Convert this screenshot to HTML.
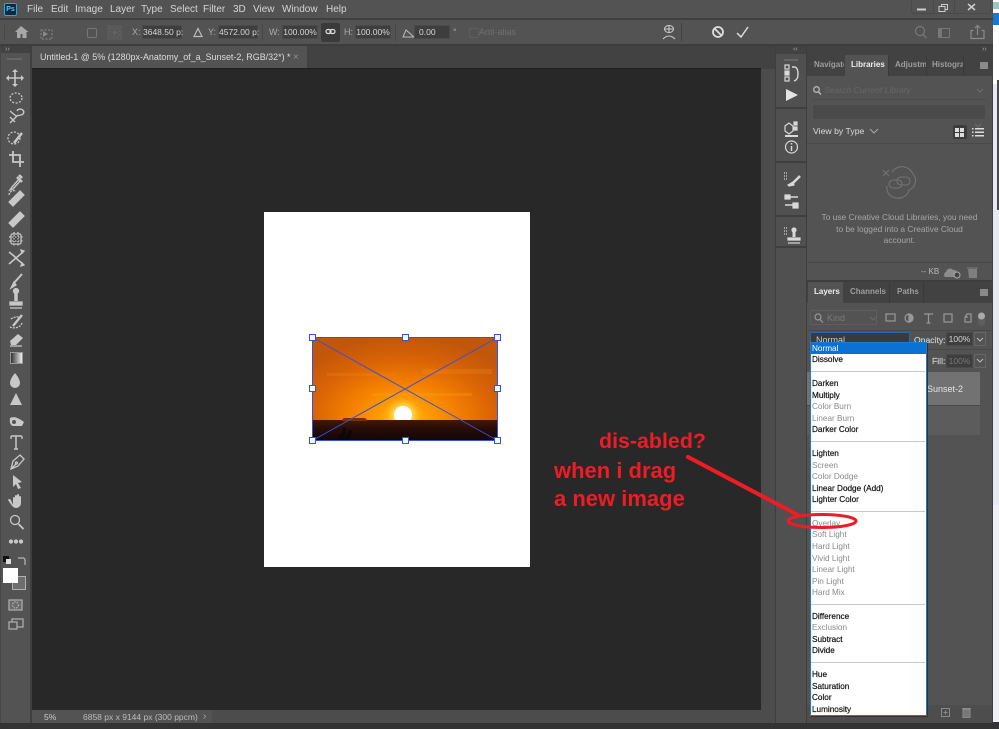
<!DOCTYPE html>
<html><head><meta charset="utf-8"><style>
html,body{margin:0;padding:0;background:#535353}
#r{position:relative;width:999px;height:729px;overflow:hidden;background:#535353;font-family:"Liberation Sans",sans-serif;color:#d0d0d0;filter:blur(.3px)}
#r div{position:absolute;white-space:nowrap}
.m{top:3px;font-size:10px;line-height:13px;color:#d4d4d4}
.o{font-size:9px;line-height:12px;color:#bbb}
.in{background:#3e3e3e;border:1px solid #4a4a4a;box-sizing:border-box;font-size:8.5px;line-height:13px;color:#d6d6d6;text-align:center;height:14px}
.tb{font-size:8px;line-height:12px;font-weight:bold;color:#9d9d9d;overflow:hidden}
.i{font-size:8.2px;line-height:11px;left:812px;color:#111;-webkit-text-stroke:.2px #111}
.d{color:#8a8a8a;-webkit-text-stroke:0}
.h{left:811px;width:114px;height:1px;background:#c8c8c8}
.red{color:#ee1c25;font-weight:bold;font-size:22px;line-height:26px}
svg{position:absolute;overflow:visible}
</style></head><body><div id="r">

<!-- top bars -->
<div style="left:0;top:18px;width:993px;height:2px;background:#3f3f3f"></div>
<div style="left:4px;top:3px;width:11px;height:11px;background:#0b2a40;border:1px solid #2fa3dc;border-radius:2px;font-size:7px;line-height:11px;text-align:center;color:#5cc4f2;font-weight:bold">Ps</div>
<div class="m" style="left:27px">File</div><div class="m" style="left:51px">Edit</div><div class="m" style="left:75px">Image</div><div class="m" style="left:110px">Layer</div><div class="m" style="left:141px">Type</div><div class="m" style="left:170px">Select</div><div class="m" style="left:203px">Filter</div><div class="m" style="left:233px">3D</div><div class="m" style="left:253px">View</div><div class="m" style="left:282px">Window</div><div class="m" style="left:326px">Help</div>
<div style="left:911px;top:0;width:80px;height:14px;border:1px solid #4a4a4a;border-top:0;border-radius:0 0 3px 3px;box-sizing:border-box"></div>
<div style="left:933px;top:0;width:1px;height:14px;background:#484848"></div><div style="left:954px;top:0;width:1px;height:14px;background:#484848"></div>
<svg style="left:0;top:0" width="999" height="20" fill="none" stroke="#ccc"><path d="M917 9.5h9" stroke-width="2"/><rect x="939" y="6.5" width="6" height="5"/><path d="M941.5 6V4.5h6v5H945"/><path d="M968 4l7 6M975 4l-7 6" stroke-width="1.5"/></svg>

<!-- options -->
<div style="left:4px;top:25px;width:1px;height:15px;background:#474747"></div>
<svg style="left:0;top:20px" width="999" height="26" fill="none" stroke="#aaa">
<path d="M21 6l-6 6h2v6h3.500v-4h2v4h4v-6h2z" fill="#a8a8a8" stroke="none"/>
<path d="M41 10h11v9H41z" stroke-dasharray="2 1.500" stroke="#888"/><path d="M48 14l-5-3v6z" fill="#888" stroke="none"/>
<rect x="87.500" y="8.500" width="9" height="9" rx="1.500" stroke="#777"/>
<g stroke="#606060"><rect x="108" y="6" width="3" height="3"/><rect x="113" y="6" width="3" height="3"/><rect x="118" y="6" width="3" height="3"/><rect x="108" y="11" width="3" height="3"/><rect x="113" y="11" width="3" height="3" fill="#666"/><rect x="118" y="11" width="3" height="3"/><rect x="108" y="16" width="3" height="3"/><rect x="113" y="16" width="3" height="3"/><rect x="118" y="16" width="3" height="3"/></g>
<path d="M194 16.500l4-8 4 8z" stroke="#bbb" stroke-width="1.200"/>
<path d="M403 17h11l-8-7z" stroke="#bbb"/>
<circle cx="718" cy="12" r="5" stroke="#ddd" stroke-width="1.800"/><path d="M715 9l6.500 6.500" stroke="#ddd" stroke-width="1.800"/>
<path d="M737 13l4 4 7-10" stroke="#ddd" stroke-width="1.500"/>
<ellipse cx="669" cy="9" rx="4.500" ry="3.500" stroke="#ccc"/><path d="M665 9h8M669 5.500v7M663 19q6-6 12 0" stroke="#ccc"/>
<circle cx="920" cy="11" r="4.500" stroke="#777" stroke-width="1.300"/><path d="M923 14.500l3.500 3.500" stroke="#777" stroke-width="1.300"/>
<rect x="938.500" y="8.500" width="11" height="9" stroke="#777"/><rect x="939" y="9" width="3" height="8" fill="#777" stroke="none"/>
<path d="M973.500 10.500h-2.500v8h13v-8h-2.500M977.500 15V6M975 8l2.500-2.500L980 8" stroke="#8a8a8a" stroke-width="1.200"/>
</svg>
<div class="o" style="left:132px;top:26px;color:#aaa">X:</div><div class="in" style="left:142px;top:25px;width:40px">3648.50 p:</div>
<div class="o" style="left:208px;top:26px;color:#aaa">Y:</div><div class="in" style="left:218px;top:25px;width:40px">4572.00 p:</div>
<div style="left:262px;top:24px;width:1px;height:17px;background:#474747"></div>
<div class="o" style="left:269px;top:26px;color:#aaa">W:</div><div class="in" style="left:282px;top:25px;width:36px">100.00%</div>
<div style="left:321px;top:23px;width:19px;height:19px;background:#3a3a3a;border-radius:2px"></div>
<svg style="left:325px;top:28px" width="12" height="8" fill="none" stroke="#ddd" stroke-width="1.200"><rect x="1" y="1.500" width="5" height="4" rx="2"/><rect x="5" y="1.500" width="5" height="4" rx="2"/></svg>
<div class="o" style="left:344px;top:26px;color:#aaa">H:</div><div class="in" style="left:355px;top:25px;width:36px">100.00%</div>
<div style="left:395px;top:24px;width:1px;height:17px;background:#474747"></div>
<div class="in" style="left:414px;top:25px;width:36px;text-align:left;padding-left:4px">0.00</div>
<div class="o" style="left:453px;top:26px;color:#aaa">°</div>
<div style="left:469px;top:28px;width:8px;height:8px;border:1px solid #5e5e5e;border-radius:1px"></div>
<div class="o" style="left:479px;top:26px;color:#6f6f6f">Anti-alias</div>
<div style="left:681px;top:23px;width:1px;height:18px;background:#404040"></div>
<div style="left:0;top:44px;width:993px;height:2px;background:#3d3d3d"></div>

<!-- tab row -->
<div style="left:0;top:46px;width:993px;height:23px;background:#424242"></div>
<div style="left:32px;top:46px;width:275px;height:22px;background:#535353"></div>
<div style="left:40px;top:51px;font-size:8.950px;line-height:13px;color:#dcdcdc">Untitled-1 @ 5% (1280px-Anatomy_of_a_Sunset-2, RGB/32*) *</div>
<div style="left:293px;top:51px;font-size:10px;line-height:13px;color:#8f8f8f">×</div>
<div style="left:5px;top:46px;font-size:7px;line-height:8px;color:#aaa">››</div>
<div style="left:793px;top:46px;font-size:7px;line-height:8px;color:#aaa">‹‹</div><div style="left:982px;top:46px;font-size:7px;line-height:8px;color:#aaa">››</div>

<!-- left toolbar -->
<div style="left:0;top:46px;width:1px;height:677px;background:#474747"></div>
<div style="left:1px;top:53px;width:29px;height:670px;background:#535353"></div>
<div style="left:30px;top:46px;width:2px;height:677px;background:#3f3f3f"></div>
<div style="left:7px;top:58px;width:15px;height:2px;background:#666"></div>
<svg style="left:0;top:65px" width="32" height="580" fill="none" stroke="#c8c8c8" stroke-width="1.300">
<path d="M15 7v12M9 13h12" stroke-width="1.600"/><path d="M15 4l3 3h-6zM15 22l3-3h-6zM6 13l3-3v6zM24 13l-3-3v6z" fill="#c8c8c8" stroke="none"/>
<ellipse cx="16" cy="33" rx="6" ry="5" stroke-dasharray="2 1.500"/>
<path d="M10 46l6 5 5-1M10 58l8-8M17 46a3.500 3 0 1 1 4 4M10 52l5 5" stroke-width="1.400"/>
<ellipse cx="14" cy="73" rx="6" ry="6" stroke-dasharray="2 1.500"/><path d="M14 78l8-10" stroke-width="2.600"/>
<path d="M9 90h11v12M13 86v11h11" stroke-width="1.800"/>
<path d="M20 113l-8 9-2 3 3-1 8-9" stroke-width="1.400"/><path d="M17 112l5 5M19 110l3 3" stroke-width="2.600"/>
<g transform="translate(0,-5)"><path d="M10 142l10-10 3 3-10 10z" fill="#c8c8c8" stroke-width="2.600"/><path d="M9 135a5 5 0 0 1 7-4" stroke-dasharray="2 1"/></g>
<path d="M10 158l10-10 3 3-10 10z" fill="#c8c8c8" stroke-width="2.600"/>
<g transform="translate(0,-1)"><rect x="11" y="170" width="10" height="10" rx="1.500" fill="#444"/><path d="M9 173h14M9 177h14M14 168v14M18 168v14" stroke-dasharray="1.500 1.500"/></g>
<g transform="translate(0,-3)"><path d="M9 190l5 4 4 4 5 4M9 202l14-12" stroke-width="1.600"/><path d="M21 188l3 1-2 2zM21 204l3-1-2-2z" fill="#c8c8c8"/></g>
<path d="M22 209l-8 9" stroke-width="2"/><path d="M14 217l-3 6 5-3z" fill="#c8c8c8"/>
<g transform="translate(0,-4)"><path d="M16 231v9" stroke-width="3.500"/><circle cx="16" cy="230" r="2.500" fill="#c8c8c8"/><path d="M10 241h12v3H10z" fill="#c8c8c8"/><path d="M10 247h12"/></g>
<path d="M22 250l-9 11" stroke-width="2.300"/><path d="M11 254a8 4 0 0 1 9-2M10 262a8 6 0 0 0 12-4" stroke-dasharray="2 1"/>
<g transform="translate(0,-7)"><path d="M10 283l8-7 5 4-7 7h-5z" fill="#c8c8c8" stroke="none"/><path d="M10 288h12"/></g>
</svg>
<div style="left:10px;top:352px;width:13px;height:12px;background:linear-gradient(90deg,#333,#eee);border:1px solid #999;box-sizing:border-box"></div>
<svg style="left:0;top:370px" width="32" height="270" fill="none" stroke="#c8c8c8" stroke-width="1.300">
<path d="M15 2q-5 6-5 10a5 5 0 0 0 10 0q0-4-5-10z" fill="#c8c8c8" stroke="none" transform="translate(0,1)"/>
<path d="M16 23l-6 12h12z" fill="#c8c8c8" stroke="none"/>
<g transform="translate(0,3)"><path d="M10 45q5-3 14 4l-2 4h-9q-4-1-3-8z" fill="#c8c8c8" stroke="none"/><circle cx="14" cy="49" r="2" fill="#555" stroke="none"/></g>
<path d="M11 66h11M16 66v13M14 79h4" stroke-width="1.500"/><path d="M11 69v-3M22 69v-3"/>
<g transform="translate(0,-6)"><path d="M11 105l2-8 7-6 4 4-6 7zM11 105l5-5"/><circle cx="16.500" cy="99" r="1"/></g>
<g transform="translate(0,-7)"><path d="M13 112l9 7-4 1 3 5-3 1-2-5-3 3z" fill="#c8c8c8" stroke="none"/></g>
<g transform="translate(0,-8)"><path d="M12 143v-7a1 1 0 0 1 2 0v-2a1 1 0 0 1 2 0v-1a1 1 0 0 1 2 0v2a1 1 0 0 1 2 0v7a5 5 0 0 1-5 4q-3 0-6-5l-2-3q1-2 3 0z" fill="#c8c8c8" stroke="none" transform="translate(1,0)"/></g>
<g transform="translate(1,-6)"><circle cx="14" cy="156" r="4.500"/><path d="M17.500 160l5 5" stroke-width="1.800"/></g>
<g transform="translate(0,-10)"><circle cx="11" cy="181.500" r="1.500" fill="#c8c8c8"/><circle cx="16" cy="181.500" r="1.500" fill="#c8c8c8"/><circle cx="21" cy="181.500" r="1.500" fill="#c8c8c8"/></g>
</svg>
<div style="left:3px;top:556px;width:6px;height:6px;background:#111"></div><div style="left:6px;top:559px;width:5px;height:5px;background:#ddd"></div>
<svg style="left:17px;top:556px" width="10" height="10" fill="none" stroke="#ccc"><path d="M1 2h5a2 2 0 0 1 2 2v5"/></svg>
<div style="left:12px;top:576px;width:14px;height:14px;background:#6e6e6e;border:1px solid #b0b0b0;box-sizing:border-box"></div>
<div style="left:3px;top:568px;width:15px;height:15px;background:#fff"></div>
<svg style="left:0;top:595px" width="32" height="40" fill="none" stroke="#aaa" stroke-width="1.300"><rect x="9" y="5" width="13" height="10" fill="#6a6a6a"/><circle cx="15.500" cy="10" r="3" stroke-dasharray="1.500 1"/><rect x="12" y="24" width="11" height="8"/><rect x="9" y="27" width="8" height="7" fill="#535353"/></svg>

<!-- canvas -->
<div style="left:32px;top:69px;width:729px;height:641px;background:#282828"></div>
<div style="left:32px;top:68px;width:729px;height:1px;background:#1d1d1d"></div>
<div style="left:761px;top:69px;width:14px;height:641px;background:#4c4c4c"></div>
<div style="left:775px;top:46px;width:1px;height:677px;background:#3f3f3f"></div>
<div style="left:264px;top:212px;width:266px;height:355px;background:#fff"></div>
<!-- image -->
<div style="left:312px;top:337px;width:186px;height:104px;overflow:hidden;background:#c95b08">
<div style="left:0;top:0;width:186px;height:84px;background:radial-gradient(ellipse 125px 80px at 91px 80px,#ffc400 0%,#ff9a00 20%,#f58000 42%,#dc6505 70%,#c2560a 100%)"></div>
<div style="left:15px;top:36px;width:70px;height:3px;background:#f0881c;opacity:.25"></div>
<div style="left:110px;top:32px;width:70px;height:5px;background:#f5901c;opacity:.25"></div>
<div style="left:60px;top:56px;width:100px;height:3px;background:#ffa820;opacity:.25"></div>
<div style="left:82px;top:69px;width:18px;height:18px;border-radius:50%;background:#fff;box-shadow:0 0 8px 3px #ffe36a"></div>
<div style="left:0;top:83px;width:186px;height:21px;background:linear-gradient(#451606,#250b06 45%,#120505)"></div>
<div style="left:30px;top:81px;width:25px;height:3px;background:#7a3000;border-radius:3px 3px 0 0"></div>
<svg style="left:22px;top:88px" width="26" height="16" fill="#0f0505"><path d="M4 16l2-8 2 1 1-7 3 1-1 7 2 1 2-6 3 1-2 7-2 3z"/></svg>
</div>
<svg style="left:0;top:0" width="999" height="729" fill="#f4f6ff" stroke="#3453d6">
<rect x="312.500" y="337.500" width="185" height="103" fill="none"/>
<path d="M312.500 337.500L497.500 440.500M497.500 337.500L312.500 440.500" fill="none"/>
<rect x="309.500" y="334.500" width="6" height="6"/><rect x="402.500" y="334.500" width="6" height="6"/><rect x="494.500" y="334.500" width="6" height="6"/><rect x="309.500" y="385.500" width="6" height="6"/><rect x="494.500" y="385.500" width="6" height="6"/><rect x="309.500" y="437.500" width="6" height="6"/><rect x="402.500" y="437.500" width="6" height="6"/><rect x="494.500" y="437.500" width="6" height="6"/>
</svg>

<!-- status bar -->
<div style="left:32px;top:710px;width:743px;height:13px;background:#4c4c4c"></div>
<div style="left:32px;top:710px;width:37px;height:13px;background:#535353"></div>
<div style="left:69px;top:710px;width:143px;height:13px;background:#535353"></div>
<div style="left:44px;top:711px;font-size:8.500px;line-height:12px;color:#ccc">5%</div>
<div style="left:83px;top:711px;font-size:8.500px;line-height:12px;color:#bbb">6858 px x 9144 px (300 ppcm)</div>
<div style="left:203px;top:711px;font-size:10px;line-height:12px;color:#aaa">›</div>
<div style="left:0;top:723px;width:993px;height:6px;background:#333"></div>

<!-- icon column -->
<div style="left:776px;top:54px;width:30px;height:669px;background:#505050"></div>
<div style="left:806px;top:46px;width:1px;height:677px;background:#3d3d3d"></div>
<div style="left:776px;top:107px;width:30px;height:2px;background:#3f3f3f"></div>
<div style="left:776px;top:161px;width:30px;height:2px;background:#3f3f3f"></div>
<div style="left:776px;top:215px;width:30px;height:2px;background:#3f3f3f"></div>
<div style="left:776px;top:246px;width:30px;height:2px;background:#3f3f3f"></div>
<div style="left:784px;top:59px;width:14px;height:2px;background:#666"></div>
<svg style="left:776px;top:60px" width="30" height="185" fill="none" stroke="#d8d8d8" stroke-width="1.200">
<rect x="9" y="5" width="4" height="4"/><rect x="9" y="11" width="4" height="4" fill="#d8d8d8"/><rect x="9" y="17" width="4" height="4"/><path d="M16 7h3q3 1 3 7t-4 7" stroke-width="1.400"/>
<path d="M10 29v12l12-6z" fill="#e4e4e4" stroke="none"/>
<path d="M9 66l4-3 4 3v5l-4 3-4-3z"/><rect x="18" y="62" width="3" height="3" fill="#d8d8d8"/><rect x="18" y="67" width="3" height="3" fill="#d8d8d8"/><path d="M9 76h13" stroke-width="2"/>
<circle cx="15.500" cy="87" r="6"/><path d="M15.500 86v5M15.500 83v1.500" stroke-width="1.500"/>
<path d="M8 113h3M8 116h3M8 119h3" stroke-dasharray="1 1"/><path d="M24 116l-8 8" stroke-width="2.500"/><path d="M17 122l-5 3 1 1 5-1z" fill="#d8d8d8"/>
<path d="M9 137h13M9 145h13" stroke-width="1.500"/><rect x="9" y="135" width="5" height="4" fill="#d8d8d8"/><rect x="17" y="143" width="5" height="5" fill="#d8d8d8"/>
<path d="M8 168h3M8 171h3M8 174h3" stroke-dasharray="1 1"/><path d="M18 171v6" stroke-width="3"/><circle cx="18" cy="170" r="2" fill="#d8d8d8"/><path d="M12 178h12v2H12z" fill="#d8d8d8"/><path d="M12 183h12"/>
</svg>

<!-- libraries panel -->
<div style="left:807px;top:54px;width:185px;height:226px;background:#535353"></div>
<div style="left:807px;top:54px;width:185px;height:22px;background:#424242"></div>
<div style="left:845px;top:55px;width:43px;height:21px;background:#535353"></div>
<div class="tb" style="left:814px;top:59px;width:30px">Navigator</div>
<div class="tb" style="left:851px;top:59px;color:#eee">Libraries</div>
<div class="tb" style="left:895px;top:59px;width:31px">Adjustments</div>
<div class="tb" style="left:932px;top:59px;width:31px">Histogram</div>
<div style="left:888px;top:55px;width:1px;height:21px;background:#3a3a3a"></div><div style="left:926px;top:55px;width:1px;height:21px;background:#3a3a3a"></div><div style="left:963px;top:55px;width:1px;height:21px;background:#3a3a3a"></div>
<div style="left:980px;top:62px;width:8px;height:7px;background:#8a8a8a"></div>
<svg style="left:807px;top:76px" width="185" height="60" fill="none" stroke="#b5b5b5"><circle cx="9.500" cy="13.500" r="2.800" stroke-width="1.300"/><path d="M11.500 16l2.500 2.500" stroke-width="1.500"/><path d="M170 13l3 3 3-3M168 48l3 3 3-3" stroke="#6f6f6f"/></svg>
<div style="left:824px;top:84px;font-size:8.600px;line-height:12px;font-style:italic;color:#676767">Search Current Library</div>
<div style="left:813px;top:99px;width:173px;height:1px;background:#4c4c4c"></div>
<div style="left:813px;top:105px;width:172px;height:14px;background:#4a4a4a;border-radius:2px"></div>
<div style="left:813px;top:125px;font-size:8.700px;line-height:13px;color:#dcdcdc">View by Type</div>
<svg style="left:869px;top:128px" width="10" height="7" fill="none" stroke="#aaa"><path d="M1 1l4 4 4-4"/></svg>
<div style="left:953px;top:125px;width:14px;height:14px;background:#3c3c3c;border-radius:2px"></div>
<svg style="left:955px;top:128px" width="30" height="10" fill="#ddd"><rect width="4" height="4"/><rect x="5" width="4" height="4"/><rect y="5" width="4" height="4"/><rect x="5" y="5" width="4" height="4"/><path d="M17 0h1.500v1.500H17zM20 0h9v1.500h-9zM17 3.500h1.500V5H17zM20 3.500h9V5h-9zM17 7h1.500v1.500H17zM20 7h9v1.500h-9z"/></svg>
<div style="left:807px;top:143px;width:185px;height:1px;background:#484848"></div>
<svg style="left:881px;top:168px" width="40" height="28" fill="none" stroke="#737373" stroke-width="1.100"><path d="M6 18a11 10 0 0 0 22 4 10 10 0 0 0 4-16 12 12 0 0 0-21-2"/><rect x="8" y="12" width="13" height="8" rx="4"/><rect x="16" y="9" width="13" height="8" rx="4"/><path d="M2 2l6 6M8 2L2 8"/></svg>
<div style="left:807px;top:212px;width:185px;font-size:8.400px;line-height:11.700px;color:#a6a6a6;text-align:center;white-space:normal">To use Creative Cloud Libraries, you need<br>to be logged into a Creative Cloud<br>account.</div>
<div style="left:807px;top:262px;width:185px;height:1px;background:#484848"></div>
<div style="left:921px;top:266px;font-size:8px;line-height:11px;color:#bbb">-- KB</div>
<svg style="left:944px;top:266px" width="40" height="13" fill="#8c8c8c"><path d="M1 11a3 3 0 0 1 1-5 4 4 0 0 1 7-2 3 3 0 0 1 4 3v4z"/><circle cx="13" cy="9" r="3" fill="#444" stroke="#aaa"/><path d="M24 3h9v9h-8zM23 1.500h11v1H23z" fill="#7f7f7f"/></svg>

<!-- layers panel -->
<div style="left:807px;top:280px;width:185px;height:2px;background:#3d3d3d"></div>
<div style="left:807px;top:282px;width:185px;height:21px;background:#424242"></div>
<div style="left:808px;top:282px;width:35px;height:21px;background:#535353"></div>
<div class="tb" style="left:814px;top:286px;color:#eee">Layers</div>
<div class="tb" style="left:850px;top:286px">Channels</div>
<div class="tb" style="left:897px;top:286px">Paths</div>
<div style="left:889px;top:282px;width:1px;height:21px;background:#3a3a3a"></div><div style="left:923px;top:282px;width:1px;height:21px;background:#3a3a3a"></div>
<div style="left:980px;top:289px;width:8px;height:7px;background:#8a8a8a"></div>
<div style="left:810px;top:310px;width:67px;height:15px;border:1px solid #5e5e5e;border-radius:2px;box-sizing:border-box"></div>
<svg style="left:813px;top:312px" width="175" height="18" fill="none" stroke="#999" stroke-width="1.200"><circle cx="5" cy="5" r="3"/><path d="M7 7.500l3 3"/><path d="M57 5l3 3 3-3" stroke="#666"/><rect x="73" y="2" width="9" height="7"/><circle cx="96" cy="6" r="4"/><path d="M96 2a4 4 0 0 1 0 8z" fill="#999"/><path d="M111 2h9M115.500 2v9M113.500 11h4"/><rect x="131" y="2" width="8" height="8"/><path d="M152 10V5l2-3h4v8zM152 5h3"/><rect x="165" y="2" width="7" height="12" rx="3.500" fill="#5e5e5e" stroke="none"/><circle cx="168.500" cy="4" r="3.500" fill="#aaa" stroke="none"/></svg>
<div style="left:827px;top:312px;font-size:9px;line-height:12px;color:#7b7b7b">Kind</div>
<div style="left:807px;top:330px;width:185px;height:1px;background:#484848"></div>
<div style="left:810px;top:332px;width:100px;height:16px;background:#3a3a3a;border:1px solid #1f6bb4;border-radius:2px;box-sizing:border-box"></div>
<div style="left:816px;top:334px;font-size:9px;line-height:12px;color:#ccc">Normal</div>
<div style="left:914px;top:334px;font-size:8.600px;line-height:12px;color:#c8c8c8;-webkit-text-stroke:.2px #c8c8c8">Opacity:</div>
<div class="in" style="left:946px;top:332px;width:27px">100%</div>
<div style="left:974px;top:332px;width:12px;height:14px;border:1px solid #666;box-sizing:border-box"></div>
<svg style="left:976px;top:337px" width="9" height="30" fill="none" stroke="#bbb"><path d="M1 1l3 3 3-3M1 22l3 3 3-3"/></svg>
<div style="left:807px;top:349px;width:185px;height:1px;background:#484848"></div>
<div style="left:932px;top:355px;font-size:8.600px;line-height:12px;color:#c8c8c8;-webkit-text-stroke:.2px #c8c8c8">Fill:</div>
<div class="in" style="left:946px;top:354px;width:27px;color:#777">100%</div>
<div style="left:974px;top:354px;width:12px;height:14px;border:1px solid #666;box-sizing:border-box"></div>
<div style="left:807px;top:372px;width:173px;height:33px;background:#727272"></div>
<div style="left:807px;top:405px;width:173px;height:1px;background:#484848"></div>
<div style="left:807px;top:406px;width:173px;height:29px;background:#5c5c5c"></div>
<div style="left:927px;top:383px;font-size:9px;line-height:12px;color:#e4e4e4">Sunset-2</div>
<div style="left:807px;top:705px;width:185px;height:18px;background:#4d4d4d"></div>
<svg style="left:925px;top:706px" width="50" height="14" fill="none" stroke="#8a8a8a"><rect x="16.500" y="2.500" width="8" height="8"/><path d="M18.500 6.500h4M20.500 4.500v4"/><path d="M38 3.500h7v8h-7zM37 2.500h9" fill="#777"/></svg>
<div style="left:992px;top:46px;width:1px;height:677px;background:#3f3f3f"></div>

<!-- dropdown -->
<div style="left:810px;top:342px;width:117px;height:374px;background:#fff;border:1px solid #1d7bc9;box-sizing:border-box;box-shadow:1px 1px 0 #333"></div>
<div style="left:811px;top:343px;width:115px;height:11px;background:#0b72d3"></div>
<div class="i" style="top:343px;color:#fff;-webkit-text-stroke:0">Normal</div>
<div class="i" style="top:354px">Dissolve</div><div class="h" style="top:371px"></div>
<div class="i" style="top:378px">Darken</div><div class="i" style="top:390px">Multiply</div><div class="i d" style="top:401px">Color Burn</div><div class="i d" style="top:413px">Linear Burn</div><div class="i" style="top:424px">Darker Color</div><div class="h" style="top:441px"></div>
<div class="i" style="top:448px">Lighten</div><div class="i d" style="top:460px">Screen</div><div class="i d" style="top:471px">Color Dodge</div><div class="i" style="top:483px">Linear Dodge (Add)</div><div class="i" style="top:494px">Lighter Color</div><div class="h" style="top:511px"></div>
<div class="i d" style="top:518px">Overlay</div><div class="i d" style="top:529px">Soft Light</div><div class="i d" style="top:541px">Hard Light</div><div class="i d" style="top:553px">Vivid Light</div><div class="i d" style="top:564px">Linear Light</div><div class="i d" style="top:576px">Pin Light</div><div class="i d" style="top:587px">Hard Mix</div><div class="h" style="top:604px"></div>
<div class="i" style="top:611px">Difference</div><div class="i d" style="top:622px">Exclusion</div><div class="i" style="top:634px">Subtract</div><div class="i" style="top:645px">Divide</div><div class="h" style="top:662px"></div>
<div class="i" style="top:669px">Hue</div><div class="i" style="top:681px">Saturation</div><div class="i" style="top:692px">Color</div><div class="i" style="top:704px">Luminosity</div>

<!-- annotations -->
<div class="red" style="left:599px;top:428px;font-size:21.400px">dis-abled?</div>
<div class="red" style="left:554px;top:458px">when i drag</div>
<div class="red" style="left:554px;top:486px">a new image</div>
<svg style="left:0;top:0" width="999" height="729" fill="none" stroke="#ee1c25"><path d="M688 457L798 515" stroke-width="4" stroke-linecap="round"/><ellipse cx="822" cy="521" rx="34" ry="6.500" stroke-width="3"/></svg>

<!-- right strip -->
<div style="left:993px;top:0;width:6px;height:729px;background:#e6e9f4"></div>
<div style="left:993px;top:0;width:6px;height:84px;background:#fff"></div>
<div style="left:993px;top:13px;width:6px;height:12px;background:#1a78d2"></div>
<div style="left:993px;top:2px;width:6px;height:7px;background:#9cc6c0"></div>
<div style="left:997px;top:80px;width:2px;height:130px;background:#4a4a4a"></div>
<div style="left:993px;top:505px;width:6px;height:220px;background:#eef0f6"></div>
<div style="left:993px;top:722px;width:6px;height:7px;background:#333"></div>
</div></body></html>
